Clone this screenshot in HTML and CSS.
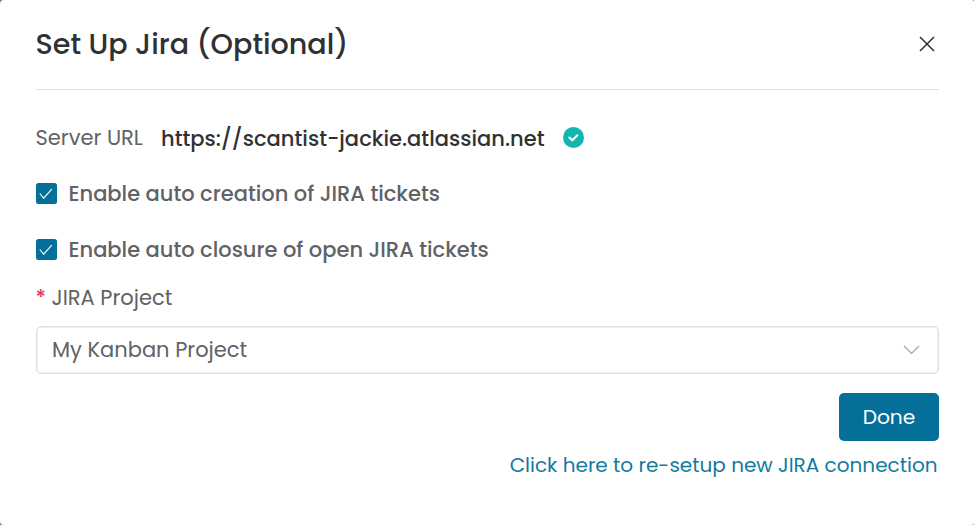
FILE: index.html
```html
<!DOCTYPE html>
<html lang="en">
<head>
<meta charset="utf-8">
<title>Set Up Jira</title>
<link rel="stylesheet" href="styles.css">
</head>
<body>
<main class="dialog">
  <header class="header">
    <h1 class="title">Set Up Jira (Optional)</h1>
    <button class="close" aria-label="Close">
      <svg width="16" height="16" viewBox="0 0 16 16"><path d="M1 1 15 15M15 1 1 15"/></svg>
    </button>
  </header>
  <div class="server">
    <span class="server-label">Server URL</span>
    <span class="url">https://scantist-jackie.atlassian.net</span>
    <svg class="verified" width="21" height="21" viewBox="0 0 21 21"><circle cx="10.5" cy="10.5" r="10.5"/><path d="m6.4 10.6 2.9 2.7 5-5"/></svg>
  </div>
  <label class="option">
    <svg class="check" width="21" height="21" viewBox="0 0 21 21"><rect width="21" height="21" rx="2.5"/><path d="m3.7 10.5 4 4.7L15.8 6.1"/></svg>
    <span>Enable auto creation of JIRA tickets</span>
  </label>
  <label class="option">
    <svg class="check" width="21" height="21" viewBox="0 0 21 21"><rect width="21" height="21" rx="2.5"/><path d="m3.7 10.5 4 4.7L15.8 6.1"/></svg>
    <span>Enable auto closure of open JIRA tickets</span>
  </label>
  <div class="field-label"><span class="required">*</span><span>JIRA Project</span></div>
  <div class="select">
    <span>My Kanban Project</span>
    <svg width="17" height="10" viewBox="0 0 17 10"><path d="m1 1 7.5 7.5L16 1"/></svg>
  </div>
  <footer class="footer">
    <button class="done">Done</button>
    <a class="reset">Click here to re-setup new JIRA connection</a>
  </footer>
</main>
</body>
</html>
```

FILE: styles.css
```css
* { box-sizing: border-box; }

body {
  margin: 0;
  background: #777;
  font-family: Poppins, Inter, "Open Sans", sans-serif;
  font-size: 21px;
  line-height: 32px;
  color: #606266;
  white-space: nowrap;
}

button {
  border: 0;
  padding: 0;
  background: none;
  font: inherit;
}

svg { display: block; flex: none; fill: none; }

.dialog {
  height: 525px;
  padding: 0 35px 0 36px;
  background: #fff;
  border-radius: 4px 2px 2px 4px;
}

.header {
  display: flex;
  align-items: center;
  justify-content: space-between;
  height: 90px;
  border-bottom: 1px solid #dcdfe6;
}

.title {
  margin: 0 0 2px -0.5px;
  font-size: 28.6px;
  font-weight: 500;
  line-height: 40px;
  color: #303133;
}

.close { margin: 0 4px 2px 0; }
.close path { stroke: #303133; stroke-width: 1.5; }

.server {
  display: flex;
  align-items: center;
  height: 56px;
  margin-top: 20px;
}

.server-label { width: 125.5px; margin-left: -0.5px; }
.url { width: 402px; font-weight: 500; letter-spacing: 0.03px; color: #303133; padding-top: 1px; }
.verified { margin-bottom: 1px; }
.verified circle { fill: #13b5b1; }
.verified path { stroke: #fff; stroke-width: 2.2; stroke-linecap: round; stroke-linejoin: round; }

.option {
  display: flex;
  align-items: center;
  gap: 11.5px;
  height: 56px;
  font-weight: 500;
}

.check { margin-bottom: 2px; }
.check rect { fill: #046f99; }
.check path { stroke: #fff; stroke-width: 1.1; }

.field-label { display: flex; height: 48px; padding-top: 4px; }
.required { width: 16px; margin-left: -0.5px; color: #e63964; font-weight: 500; }

.select {
  display: flex;
  align-items: center;
  justify-content: space-between;
  height: 48px;
  padding: 0 18px 0 15px;
  border: 1px solid #dcdfe6;
  border-radius: 5px;
  box-shadow: inset 0 0 0 0.5px #dcdfe6;
}
.select path { stroke: #a0a3aa; stroke-width: 1.2; }

.footer {
  display: flex;
  flex-direction: column;
  align-items: flex-end;
  margin-top: 19px;
}

.done {
  width: 100px;
  height: 48px;
  border-radius: 5px;
  background: #046f99;
  font-size: 20.2px;
  color: #fff;
}

.reset { margin-top: 8px; margin-right: 1.5px; color: #147a9f; font-size: 20px; }
```
